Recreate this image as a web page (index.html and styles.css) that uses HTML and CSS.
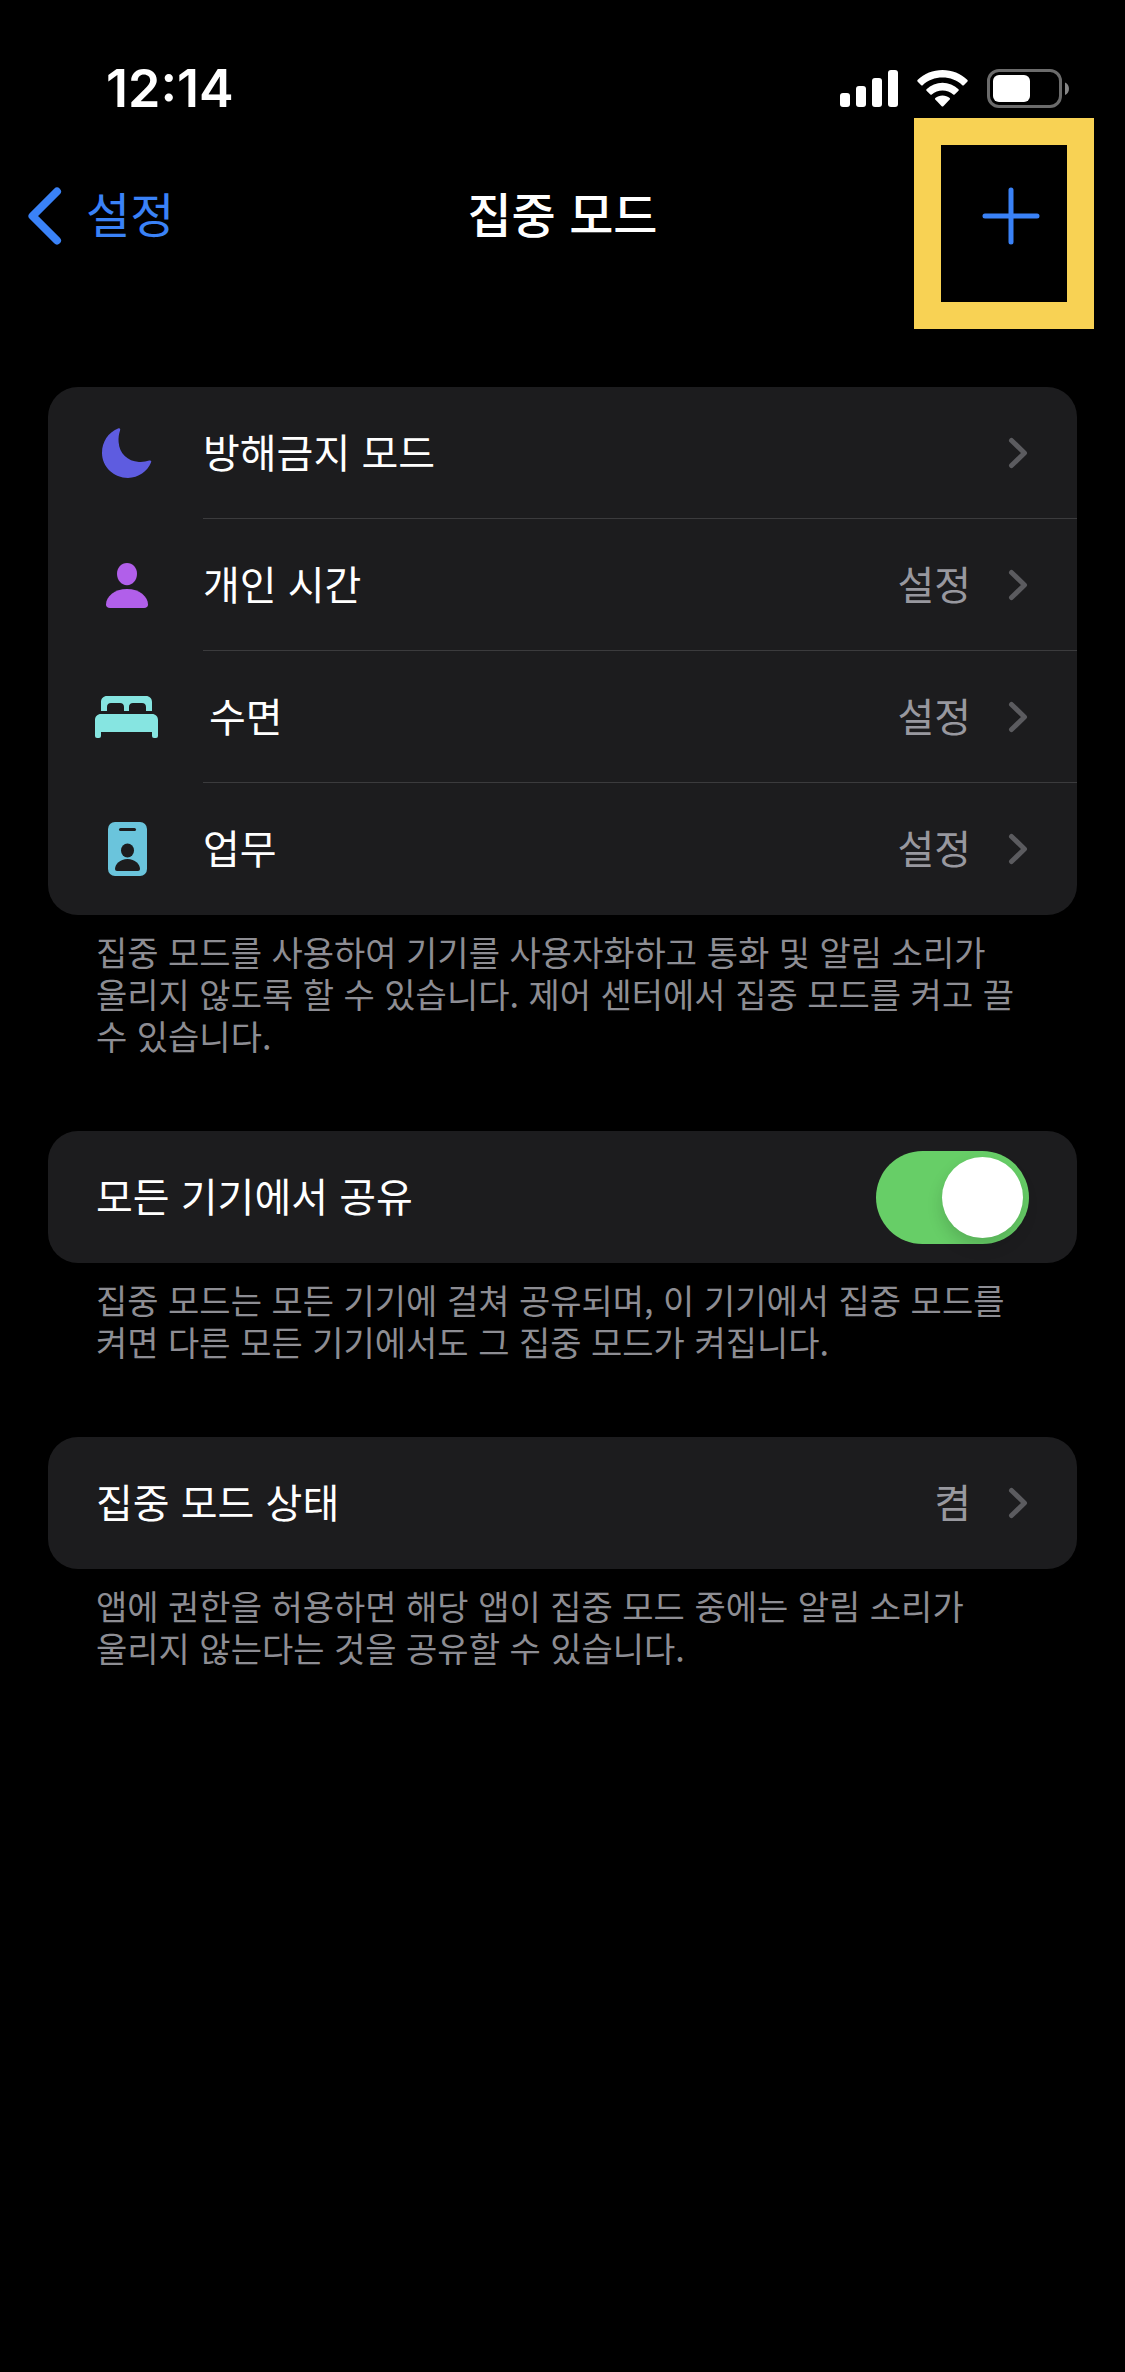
FILE: index.html
```html
<!DOCTYPE html>
<html lang="ko">
<head>
<meta charset="utf-8">
<meta name="viewport" content="width=device-width">
<title>집중 모드</title>
<link rel="stylesheet" href="styles.css">
</head>
<body>
<div class="status">
  <time class="clock">12:14</time>
  <div class="indicators">
    <svg width="58" height="38" viewBox="0 0 58 38" fill="#fff" aria-hidden="true">
      <rect x="0" y="23" width="10" height="14" rx="3"/><rect x="16" y="16" width="10" height="21" rx="3"/><rect x="32" y="8" width="10" height="29" rx="3"/><rect x="48" y="0" width="10" height="37" rx="3"/>
    </svg>
    <svg width="51" height="38" viewBox="0 0 51 38" fill="#fff" aria-hidden="true">
      <path d="M25.500 0C16 0 7.200 3.600.5 10Q0 10.800.5 11.400L4.200 15.200Q5 15.800 5.700 15.200C11 10.200 18 7.600 25.500 7.600S40 10.200 45.300 15.200Q46 15.800 46.800 15.200L50.500 11.400Q51 10.800 50.500 10C43.800 3.600 35 0 25.500 0Z"/>
      <path d="M25.500 12.800C19.500 12.800 13.900 15 9.500 19.200Q8.900 20 9.500 20.700L13.400 24.600Q14.100 25.100 14.800 24.600A15.800 15.800 0 0 1 36.200 24.600Q36.900 25.100 37.600 24.600L41.500 20.700Q42.100 20 41.500 19.200C37.100 15 31.500 12.800 25.500 12.800Z"/>
      <path d="M25.500 25.400C22.800 25.400 20.300 26.300 18.300 28Q17.600 28.800 18.300 29.600L24.700 36.200Q25.500 37 26.300 36.200L32.700 29.600Q33.400 28.800 32.700 28C30.700 26.300 28.200 25.400 25.500 25.400Z"/>
    </svg>
    <svg width="82" height="40" viewBox="0 0 82 40" aria-hidden="true">
      <rect x="1.500" y="1.500" width="72" height="36" rx="10.500" fill="none" stroke="#6b6b6b" stroke-width="3"/>
      <rect x="6" y="6" width="37" height="27" rx="6" fill="#fff"/>
      <path d="M78 13.500C83.300 15.500 83.300 24 78 26Z" fill="#868686"/>
    </svg>
  </div>
</div>

<header class="nav">
  <a class="back" href="#settings">
    <svg width="34" height="58" viewBox="0 0 34 58" fill="none" stroke="#3a82f7" stroke-width="8" stroke-linecap="round" stroke-linejoin="round" aria-hidden="true"><path d="M29 4.500L4.500 29L29 53.500"/></svg>
    <span class="nav-text">설정</span>
  </a>
  <h1 class="title nav-text">집중 모드</h1>
  <button class="add" type="button" aria-label="추가">
    <svg width="58" height="58" viewBox="0 0 58 58" fill="none" stroke="#3a82f7" stroke-width="5" stroke-linecap="round" aria-hidden="true"><path d="M29 3V55M3 29H55"/></svg>
  </button>
  <div class="highlight"></div>
</header>

<main class="content">
  <section class="group">
    <ul class="card">
      <li><a class="row" href="#dnd">
        <span class="icon"><svg width="64" height="64" viewBox="0 0 64 64" fill="#5e5ce0" aria-hidden="true"><path d="M22 7.600C23.600 6.900 24.600 7.600 24.100 9.200C22.800 13 22.300 17 22.600 21C23.400 32.500 31.500 40.300 43 40.900C46.500 41.100 50 40.700 53.200 39.600C54.900 39.100 55.700 40 55 41.600C51.300 50.600 42.500 56.900 32 56.900C18 56.900 6 46 6 32C6 20.900 12.200 11.700 22 7.600Z"/></svg></span>
        <span class="line"><span class="label">방해금지 모드</span><svg class="chevron" viewBox="0 0 18 30" aria-hidden="true"><path d="M2.500 2.500L15.500 15L2.500 27.500"/></svg></span>
      </a></li>
      <li><a class="row" href="#personal">
        <span class="icon"><svg width="64" height="64" viewBox="0 0 64 64" fill="#b15fea" aria-hidden="true"><path d="M31 10C36.700 10 41 14.600 41 20.800C41 27.200 36.700 32.200 31 32.200S21 27.200 21 20.800C21 14.600 25.300 10 31 10Z"/><path d="M31 36C43.500 36 52 43.800 52 51.500C52 53.800 50.500 55 48 55H14C11.500 55 10 53.800 10 51.500C10 43.800 18.500 36 31 36Z"/></svg></span>
        <span class="line"><span class="label">개인 시간</span><span class="label value">설정</span><svg class="chevron" viewBox="0 0 18 30" aria-hidden="true"><path d="M2.500 2.500L15.500 15L2.500 27.500"/></svg></span>
      </a></li>
      <li><a class="row" href="#sleep">
        <span class="icon"><svg width="70" height="64" viewBox="0 0 70 64" fill="#86e5e1" aria-hidden="true"><path d="M5 26V17C5 13.500 7.500 11 11 11H50C53.500 11 56 13.500 56 17V26H50V22C50 19.500 48.500 18 46 18H37C34.500 18 33 19.500 33 22V26H28V22C28 19.500 26.500 18 24 18H15C12.500 18 11 19.500 11 22V26Z"/><path d="M-1 51V35C-1 31.500 1.500 29 5 29H56C59.500 29 62 31.500 62 35V51Q62 53 60 53H58Q56 53 56 51V47H5V51Q5 53 3 53H1Q-1 53-1 51Z"/></svg></span>
        <span class="line"><span class="label">수면</span><span class="label value">설정</span><svg class="chevron" viewBox="0 0 18 30" aria-hidden="true"><path d="M2.500 2.500L15.500 15L2.500 27.500"/></svg></span>
      </a></li>
      <li><a class="row" href="#work">
        <span class="icon"><svg width="64" height="64" viewBox="0 0 64 64" aria-hidden="true"><rect x="12" y="5" width="39" height="54" rx="7" fill="#6ac4dc"/><g fill="#1c1c1e"><rect x="23" y="11" width="17" height="3" rx="1.500"/><ellipse cx="31.500" cy="33.500" rx="6.500" ry="7"/><path d="M31.500 42C39 42 44 47.500 44 52Q44 54 42 54H21Q19 54 19 52C19 47.500 24 42 31.500 42Z"/></g></svg></span>
        <span class="line"><span class="label">업무</span><span class="label value">설정</span><svg class="chevron" viewBox="0 0 18 30" aria-hidden="true"><path d="M2.500 2.500L15.500 15L2.500 27.500"/></svg></span>
      </a></li>
    </ul>
    <p class="note">집중 모드를 사용하여 기기를 사용자화하고 통화 및 알림 소리가 울리지 않도록 할 수 있습니다. 제어 센터에서 집중 모드를 켜고 끌 수 있습니다.</p>
  </section>

  <section class="group">
    <div class="card">
      <label class="row" for="share"><span class="line"><span class="label">모든 기기에서 공유</span><input class="switch" id="share" type="checkbox" checked></span></label>
    </div>
    <p class="note">집중 모드는 모든 기기에 걸쳐 공유되며, 이 기기에서 집중 모드를 켜면 다른 모든 기기에서도 그 집중 모드가 켜집니다.</p>
  </section>

  <section class="group">
    <div class="card">
      <a class="row" href="#focus-status"><span class="line"><span class="label">집중 모드 상태</span><span class="label value">켬</span><svg class="chevron" viewBox="0 0 18 30" aria-hidden="true"><path d="M2.500 2.500L15.500 15L2.500 27.500"/></svg></span></a>
    </div>
    <p class="note">앱에 권한을 허용하면 해당 앱이 집중 모드 중에는 알림 소리가 울리지 않는다는 것을 공유할 수 있습니다.</p>
  </section>
</main>
</body>
</html>
```
FILE: styles.css
```css
* {
  box-sizing: border-box;
}

body {
  margin: 0;
  min-height: 100vh;
  background: #000;
  color: #fff;
  font: 40px/60px "Noto Sans CJK KR", sans-serif;
  word-break: keep-all;
}

a {
  color: inherit;
  text-decoration: none;
}

svg {
  display: block;
  flex: none;
  overflow: visible;
}

/* Status bar */
.status {
  display: flex;
  align-items: center;
  justify-content: space-between;
  height: 178px;
  padding: 0 56px 0 106px;
}

.clock {
  font: 600 52px/60px Inter, sans-serif;
}

.indicators {
  display: flex;
  align-items: center;
  gap: 19px;
}

/* Navigation bar */
.nav {
  position: relative;
  display: grid;
  grid-template-columns: 1fr auto 1fr;
  align-items: center;
  height: 76px;
  padding: 0 28px;
}

.back {
  display: flex;
  align-items: center;
  gap: 24px;
  color: #3a82f7;
}

/* Bottom padding centres the Hangul, which sits low in its line box */
.nav-text {
  padding-bottom: 8px;
  font-size: 48px;
}

.title {
  margin: 0;
  font-weight: 500;
}

.add {
  justify-self: end;
  margin-right: 57px;
  padding: 0;
  border: 0;
  background: none;
}

.highlight {
  position: absolute;
  top: -60px;
  right: 31px;
  width: 180px;
  height: 211px;
  border: 27px solid #f8d254;
  pointer-events: none;
}

/* Grouped lists */
.content {
  display: flex;
  flex-direction: column;
  gap: 72px;
  padding: 133px 48px 72px;
}

.card {
  margin: 0;
  padding: 0;
  overflow: hidden;
  border-radius: 30px;
  background: #1c1c1e;
  list-style: none;
}

.row {
  display: flex;
  align-items: center;
  gap: 43px;
  height: 132px;
  padding-left: 48px;
}

.icon {
  flex: none;
}

.line {
  display: flex;
  flex: 1;
  align-items: center;
  height: 100%;
  padding-right: 48px;
}

.label {
  padding-bottom: 4px;
}

.label:first-child {
  margin-right: auto;
}

li:not(:last-child) .row {
  background: linear-gradient(#3b3b3d, #3b3b3d) 155px 100% / 100% 1px no-repeat;
}

.value {
  color: #98989f;
}

.chevron {
  width: 18px;
  height: 30px;
  margin: 0 2px 0 38px;
  fill: none;
  stroke: #5b5b5f;
  stroke-width: 5px;
  stroke-linecap: round;
  stroke-linejoin: round;
}

.note {
  margin: 0;
  padding: 16px 48px 2px;
  color: #8d8d93;
  font-size: 34px;
  line-height: 42px;
}

/* Toggle switch */
.switch {
  width: 153px;
  height: 93px;
  margin: 0;
  padding: 6px;
  border-radius: 47px;
  background: #3a3a3c;
  appearance: none;
}

.switch::before {
  display: block;
  width: 81px;
  height: 81px;
  border-radius: 50%;
  background: #fff;
  box-shadow: 0 8px 16px rgba(0, 0, 0, 0.15);
  content: "";
}

.switch:checked {
  background: #67ce67;
}

.switch:checked::before {
  margin-left: auto;
}
```
